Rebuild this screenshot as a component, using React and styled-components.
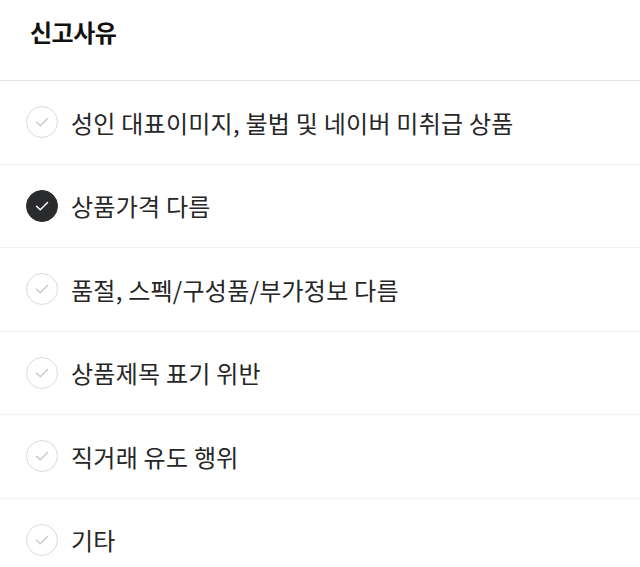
import React, { useState } from "react";
import styled, { createGlobalStyle } from "styled-components";

const Global = createGlobalStyle`
  html, body { margin: 0; padding: 0; background: #fff; }
  body { font-family: "Noto Sans CJK KR", "Noto Sans", sans-serif; color: #222; }
`;

const Page = styled.div`
  width: 640px;
  background: #fff;
`;

const Header = styled.header`
  height: 81px;
  box-sizing: border-box;
  display: flex;
  align-items: center;
  padding: 0 30px 18px;
  border-bottom: 1px solid #e3e3e3;
`;

const Title = styled.h1`
  margin: 0;
  font-size: 24px;
  font-weight: 700;
  color: #111;
  letter-spacing: -0.5px;
`;

const List = styled.ul`
  list-style: none;
  margin: 0;
  padding: 0;
`;

const Row = styled.li`
  height: 83.5px;
  box-sizing: border-box;
  display: flex;
  align-items: center;
  gap: 13px;
  padding: 0 26px;
  border-bottom: 1px solid #f2f2f2;
  cursor: pointer;
`;

const Circle = styled.span`
  width: 32px;
  height: 32px;
  box-sizing: border-box;
  border-radius: 50%;
  flex: none;
  display: flex;
  align-items: center;
  justify-content: center;
  background: ${(p) => (p.$checked ? "#2a2b2d" : "#fff")};
  border: 1px solid ${(p) => (p.$checked ? "#2a2b2d" : "#dcdcdc")};
`;

const Label = styled.span`
  font-size: 24px;
  color: #262626;
  letter-spacing: 0.25px;
`;

const Check = ({ color }) => (
  <svg width="16" height="16" viewBox="0 0 16 16" fill="none">
    <path d="M2.5 8.2 L6.3 11.8 L13.5 4.5" stroke={color} strokeWidth="1.5" strokeLinecap="round" strokeLinejoin="round" />
  </svg>
);

const reasons = [
  "성인 대표이미지, 불법 및 네이버 미취급 상품",
  "상품가격 다름",
  "품절, 스펙/구성품/부가정보 다름",
  "상품제목 표기 위반",
  "직거래 유도 행위",
  "기타",
];

export default function App() {
  const [selected, setSelected] = useState(1);
  return (
    <Page>
      <Global />
      <Header>
        <Title>신고사유</Title>
      </Header>
      <List>
        {reasons.map((r, i) => (
          <Row key={r} onClick={() => setSelected(i)}>
            <Circle $checked={selected === i}>
              <Check color={selected === i ? "#fff" : "#c9c9c9"} />
            </Circle>
            <Label>{r}</Label>
          </Row>
        ))}
      </List>
    </Page>
  );
}
